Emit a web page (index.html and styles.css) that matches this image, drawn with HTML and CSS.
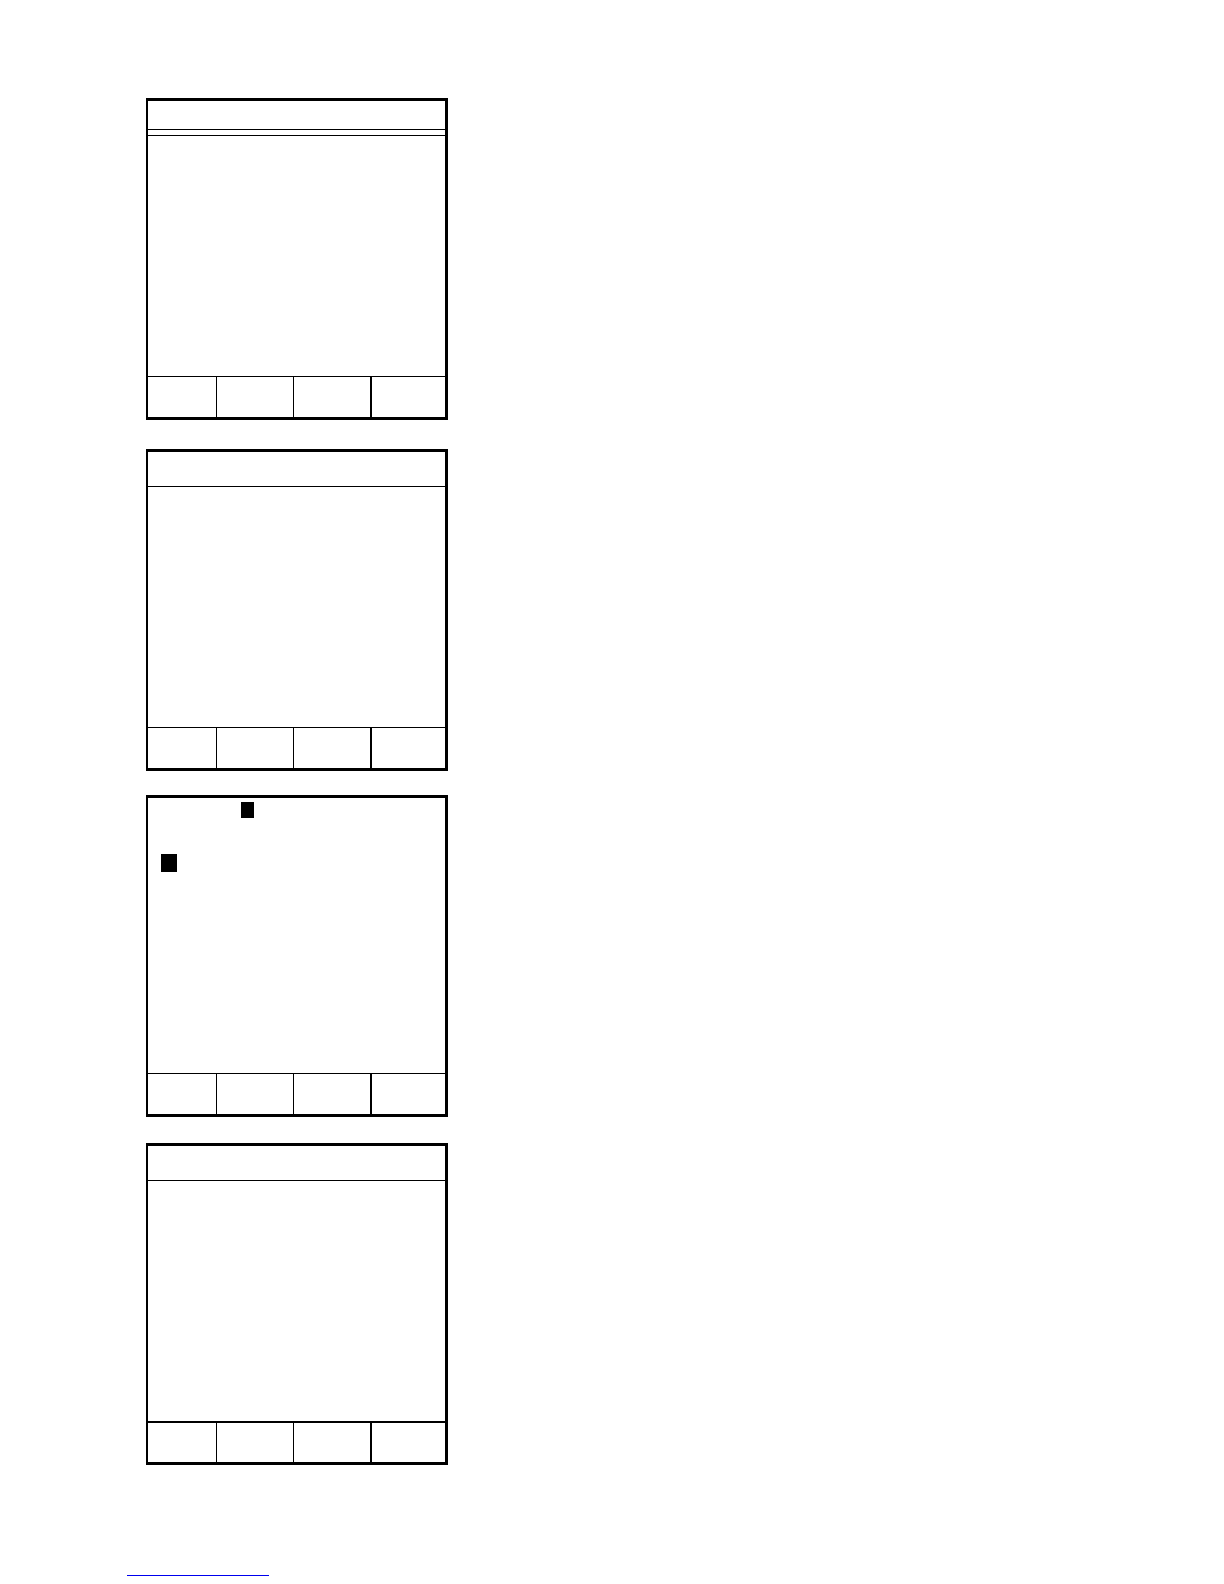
FILE: index.html
```html
<!DOCTYPE html>
<html>
<head>
<meta charset="utf-8">
<link rel="stylesheet" href="styles.css">
</head>
<body>
<div class="page">
  <div class="panel p1">
    <div class="head head-double"></div>
    <div class="body body-double"></div>
    <div class="foot"><div class="c c1"></div><div class="c c2"></div><div class="c c3"></div><div class="c c4"></div></div>
  </div>
  <div class="panel p2">
    <div class="head"></div>
    <div class="body"></div>
    <div class="foot"><div class="c c1"></div><div class="c c2"></div><div class="c c3"></div><div class="c c4"></div></div>
  </div>
  <div class="panel p3">
    <div class="body body-plain">
      <div class="cursor cur1"></div>
      <div class="cursor cur2"></div>
    </div>
    <div class="foot"><div class="c c1"></div><div class="c c2"></div><div class="c c3"></div><div class="c c4"></div></div>
  </div>
  <div class="panel p4">
    <div class="head"></div>
    <div class="body"></div>
    <div class="foot foot-thick"><div class="c c1"></div><div class="c c2"></div><div class="c c3"></div><div class="c c4"></div></div>
  </div>
  <div class="link-line"></div>
</div>
</body>
</html>
```

FILE: styles.css
```css
html, body {
  margin: 0;
  padding: 0;
  background: #ffffff;
  font-family: "Liberation Sans", Arial, sans-serif;
}
.page {
  width: 1224px;
  height: 1584px;
  padding-top: 98px;
  padding-left: 146px;
  box-sizing: border-box;
  display: flex;
  flex-direction: column;
}
.panel {
  width: 302px;
  height: 322px;
  box-sizing: border-box;
  border: 3px solid #000;
  border-left-width: 2px;
  display: flex;
  flex-direction: column;
  flex-shrink: 0;
}
.p2 { margin-top: 29px; }
.p3 { margin-top: 24px; }
.p4 { margin-top: 26px; }
.head {
  height: 34px;
  border-bottom: 1px solid #000;
  flex-shrink: 0;
}
.head-double {
  height: 28px;
}
.body {
  flex: 1;
}
.body-double {
  margin-top: 5px;
  border-top: 1px solid #000;
}
.body-plain {
  padding-top: 4px;
}
.cursor {
  background: #000;
}
.cur1 {
  width: 13px;
  height: 16px;
  margin-left: 93px;
}
.cur2 {
  width: 16px;
  height: 18px;
  margin-left: 13px;
  margin-top: 36px;
}
.foot {
  height: 41px;
  box-sizing: border-box;
  border-top: 1px solid #000;
  display: flex;
  flex-shrink: 0;
}
.foot-thick {
  border-top-width: 2px;
}
.c { height: 100%; }
.c1 { width: 68px; border-right: 1px solid #000; }
.c2 { width: 76px; border-right: 1px solid #000; }
.c3 { width: 76px; border-right: 2px solid #000; }
.c4 { flex: 1; }
.link-line {
  margin-top: 110px;
  margin-left: -19px;
  width: 142px;
  height: 0;
  border-top: 1px solid #0000ee;
}
```
